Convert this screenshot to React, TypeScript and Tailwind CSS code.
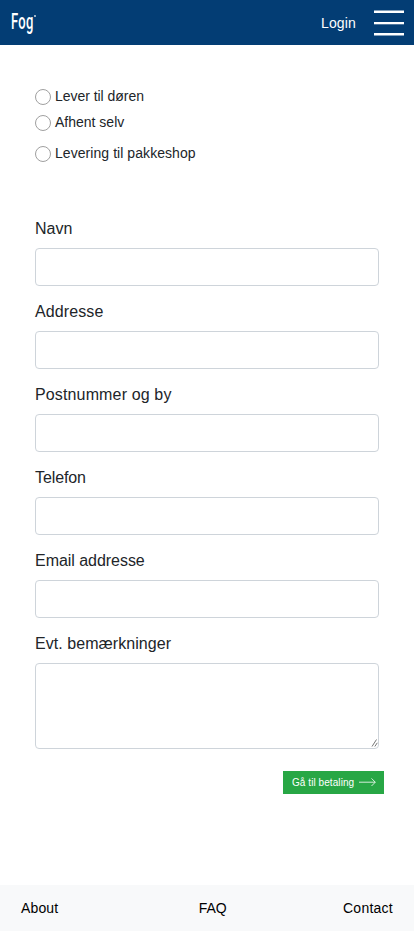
import React from 'react';

const fields = [
  { label: 'Navn', spacing: 'tracking-[0px]' },
  { label: 'Addresse', spacing: 'tracking-[0.1px]' },
  { label: 'Postnummer og by', spacing: 'tracking-[0.14px]' },
  { label: 'Telefon', spacing: 'tracking-[-0.1px]' },
  { label: 'Email addresse', spacing: 'tracking-[-0.04px]' },
];

function Delivery({ label, spacing }: { label: string; spacing: string }) {
  return (
    <label className="flex h-[18px] items-center gap-[4px] text-[14px] leading-[18px]">
      <input type="radio" name="delivery" className="size-[16px] shrink-0 appearance-none rounded-full border border-[#a0a0a0] bg-white" />
      <span className={`-mt-[2px] whitespace-nowrap ${spacing}`}>{label}</span>
    </label>
  );
}

export default function App() {
  return (
    <div className="flex h-[931px] w-full flex-col bg-white font-['Liberation_Sans',Arial,sans-serif] text-[#212529]">
      <header className="flex h-[45px] shrink-0 items-center bg-[#033d74] pr-[10px] pl-[11px] text-white">
        <div className="-mt-[2px] flex h-[24px] w-[28px] items-start">
          <span className="w-[23px] origin-left scale-x-[0.59] font-['Roboto',sans-serif] text-[22px] leading-[24px] font-medium tracking-[0.6px]">Fog</span>
          <span className="mt-[5px] h-[2px] w-[1.5px] rounded-full bg-white/80" />
        </div>
        <a className="ml-auto text-[14px] leading-[20px] tracking-[0.15px]">Login</a>
        <button aria-label="Menu" className="ml-[18px] h-[27px] w-[30px]">
          <svg className="block h-[27px] w-[30px]" viewBox="0 0 30 27" fill="white">
            <rect y="1.5" width="30" height="2.5" />
            <rect y="13" width="30" height="2.3" />
            <rect y="24" width="30" height="2.5" />
          </svg>
        </button>
      </header>

      <main className="flex grow flex-col px-[35px] pt-[43px]">
        <div className="flex flex-col">
          <Delivery label="Lever til døren" spacing="tracking-[-0.04px]" />
          <div className="h-[8px]" />
          <Delivery label="Afhent selv" spacing="tracking-[0px]" />
          <div className="h-[13px]" />
          <Delivery label="Levering til pakkeshop" spacing="tracking-[0.06px]" />
        </div>

        <form className="mt-[54px] flex flex-col">
          {fields.map((field) => (
            <div key={field.label} className="flex h-[83px] flex-col">
              <label className={`h-[31px] text-[16px] leading-[24px] ${field.spacing}`}>{field.label}</label>
              <input className="h-[38px] w-full rounded-[4px] border border-[#ced4da] bg-white" />
            </div>
          ))}
          <label className="h-[31px] text-[16px] leading-[24px] tracking-[0.05px]">Evt. bemærkninger</label>
          <textarea className="h-[86px] w-full resize-none rounded-[4px] border border-[#ced4da] bg-white" />
          <svg className="-mt-[10px] mr-[1px] h-[8px] w-[7px] self-end" viewBox="0 0 7 8" fill="none" stroke="#666" strokeWidth="0.9">
            <path d="M1 7.5L5.5 0.5M3.8 7.5L6.3 3.8" />
          </svg>
          <button type="button" className="mt-[24px] -mr-[5px] flex h-[22.5px] w-[101px] items-center self-end bg-[#28a745] pl-[9px] text-[10px] text-white">
            <span className="w-[67px] text-left tracking-[0.07px] whitespace-nowrap">Gå til betaling</span>
            <svg className="h-[9px] w-[17px] shrink-0" viewBox="0 0 17 9" fill="none" stroke="white" strokeWidth="0.8">
              <path d="M0 4.2H16.2M12.5 0.4L16.3 4.2L12.5 8" />
            </svg>
          </button>
        </form>
      </main>

      <footer className="flex h-[46px] shrink-0 items-center justify-between bg-[#f8f9fa] pr-[21px] pl-[21px] text-[14px] text-black">
        <a className="tracking-[0.15px]">About</a>
        <a className="ml-[24px]">FAQ</a>
        <a className="tracking-[0.25px]">Contact</a>
      </footer>
    </div>
  );
}
